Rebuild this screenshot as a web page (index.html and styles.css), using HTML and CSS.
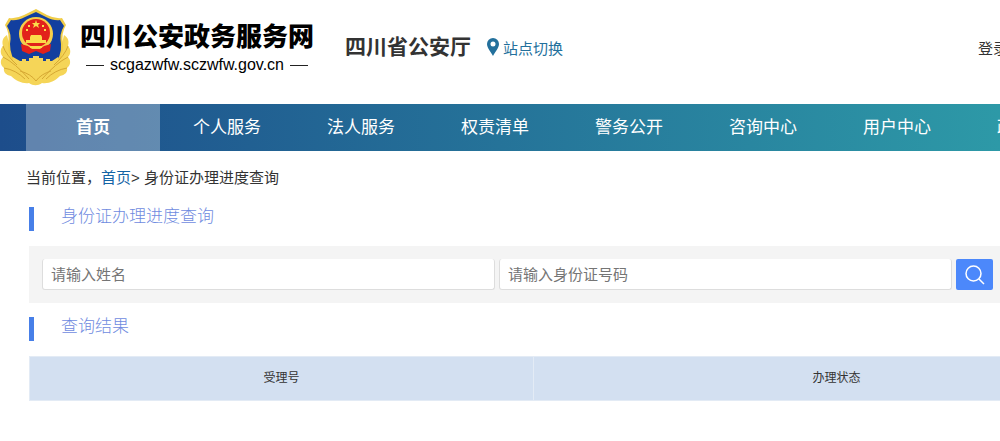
FILE: index.html
```html
<!DOCTYPE html>
<html lang="zh-CN">
<head>
    <meta charset="UTF-8">
    <meta name="viewport" content="width=device-width, initial-scale=1.0">
    <title>身份证办理进度查询</title>
    <link rel="stylesheet" href="styles.css">
</head>
<body>

<header class="header">
    <a class="logo" href="#">
        <svg class="badge" viewBox="0 0 72 78" aria-hidden="true">
            <!-- wheat wreath -->
            <path fill="#f5d558" d="M7 27C2 30 2 34 3 38C0 41 0 46 3 49C0 52 0 57 4 60C3 64 6 67 11 68C16 73 23 76 29 75C33 78 38 78 42 75C49 76 55 73 60 68C65 67 68 64 67 60C71 57 71 52 68 49C71 46 71 41 68 38C69 34 69 30 64 27L58 52L36 60L13 52Z"/>
            <!-- shield -->
            <path fill="#f0cd48" d="M36 1L47 7Q55 11 62 10L66 17Q61 25 63 36Q64 50 54 58L36 64L17 58Q8 50 8 36Q10 25 5 17L9 10Q16 11 24 7Z"/>
            <path fill="#123f9f" d="M36 4L46 9Q54 13 60 12L64 18Q59 26 61 36Q62 49 53 56L36 60L18 56Q10 49 10 36Q12 26 7 18L11 12Q17 13 25 9Z"/>
            <!-- national emblem -->
            <circle cx="36" cy="26" r="17" fill="#f6cf4a"/>
            <circle cx="36" cy="25" r="14" fill="#e2211b"/>
            <path fill="#e2211b" d="M21 36L28 38L32 41H40L44 38L51 36L50 43L43 46L36 43L29 46L22 43Z"/>
            <path fill="#fbdc4a" d="M36 12L37 15H40L38 17L39 20L36 18L33 20L34 17L32 15H35Z"/>
            <path fill="#fbdc4a" d="M28 17h2v2h-2zM42 17h2v2h-2zM26 21h2v2h-2zM44 21h2v2h-2zM31 27h10l1 2H30zM30 29h12v3H30zM26 32h20v3H26zM30 38h12v2H30z"/>
            <!-- great wall -->
            <path fill="#f5d558" d="M13 49L20 53H22V51H26V53H29V50H33V48H39V50H43V53H46V51H50V53H52L58 49L59 57L48 62L36 67L24 62L12 57Z"/>
            <path fill="none" stroke="#d6a833" stroke-width="1" d="M3 49Q15 55 29 71M4 60Q16 62 25 71M68 49Q56 55 42 71M67 60Q55 62 46 71M3 38Q6 47 17 57M68 38Q65 47 54 57M20 63Q31 66 36 73Q41 66 51 63"/>
        </svg>
        <span class="logo-text">
            <span class="logo-name">四川公安政务服务网</span>
            <span class="logo-url">scgazwfw.sczwfw.gov.cn</span>
        </span>
    </a>
    <span class="dept">四川省公安厅</span>
    <a class="site-switch" href="#">
        <svg class="pin" viewBox="0 0 12 18" aria-hidden="true">
            <path fill="#23709c" fill-rule="evenodd" d="M6 0A6 6 0 0 0 0 6C0 10 4 14 6 18C8 14 12 10 12 6A6 6 0 0 0 6 0ZM6 3.5A2.5 2.5 0 1 1 6 8.500A2.500 2.500 0 1 1 6 3.500Z"/>
        </svg>
        站点切换
    </a>
    <a class="login" href="#">登录</a>
</header>

<nav class="nav">
    <a class="nav-item active" href="#">首页</a>
    <a class="nav-item" href="#">个人服务</a>
    <a class="nav-item" href="#">法人服务</a>
    <a class="nav-item" href="#">权责清单</a>
    <a class="nav-item" href="#">警务公开</a>
    <a class="nav-item" href="#">咨询中心</a>
    <a class="nav-item" href="#">用户中心</a>
    <a class="nav-item" href="#">政民互动</a>
</nav>

<main class="main">
    <div class="crumbs">当前位置，<a href="#">首页</a>&gt; 身份证办理进度查询</div>

    <div class="content">
        <h2 class="title">身份证办理进度查询</h2>
        <form class="search">
            <input type="text" name="name" placeholder="请输入姓名" aria-label="姓名">
            <input type="text" name="idcard" placeholder="请输入身份证号码" aria-label="身份证号码">
            <button type="button" aria-label="查询">
                <svg viewBox="0 0 20 20" aria-hidden="true">
                    <circle cx="8.500" cy="8.500" r="7.500"/>
                    <path d="M14 14L19 19"/>
                </svg>
            </button>
        </form>

        <h2 class="title">查询结果</h2>
        <table class="result">
            <thead>
                <tr>
                    <th class="col-no">受理号</th>
                    <th>办理状态</th>
                </tr>
            </thead>
        </table>
    </div>
</main>

</body>
</html>
```
FILE: styles.css
```css
* {
    box-sizing: border-box;
}
body {
    margin: 0;
    background: #fff;
    color: #333;
    font-family: "Liberation Sans", "Noto Sans CJK SC", sans-serif;
    font-size: 15px;
    overflow-x: hidden;
}
a {
    text-decoration: none;
}
.header {
    display: flex;
    align-items: center;
    height: 104px;
    padding-bottom: 10px;
    overflow: hidden;
}
.logo {
    display: flex;
    align-items: center;
    gap: 8px;
    color: #000;
}
.badge {
    width: 72px;
    height: 78px;
}
.logo-text {
    display: flex;
    flex-direction: column;
}
.logo-name {
    font-size: 26px;
    line-height: 36px;
    font-weight: 900;
}
.logo-url {
    display: flex;
    align-items: center;
    justify-content: center;
    gap: 6px;
    font-size: 16px;
    line-height: 20px;
}
.logo-url::before,
.logo-url::after {
    content: "";
    width: 18px;
    height: 1px;
    background: #222;
}
.dept {
    margin-left: 31px;
    font-size: 21px;
    line-height: 30px;
    font-weight: bold;
}
.site-switch {
    display: flex;
    align-items: center;
    gap: 4px;
    margin-left: 16px;
    color: #23709c;
}
.pin {
    width: 12px;
    height: 18px;
}
.login {
    margin-left: auto;
    margin-right: -8px;
    color: #333;
}
.nav {
    display: flex;
    height: 47px;
    padding-left: 26px;
    background: linear-gradient(to right, #1d4d8b, #2d99a7);
    overflow: hidden;
}
.nav-item {
    flex: 0 0 134px;
    color: #fff;
    font-size: 17px;
    line-height: 48px;
    text-align: center;
}
.nav-item.active {
    background: rgba(255, 255, 255, 0.3);
    font-weight: bold;
}
.main {
    padding-left: 26px;
}
.crumbs {
    padding: 15px 0 17px;
    line-height: 24px;
}
.crumbs a {
    color: #1464a5;
}
/* the content column is wider than a small window */
.content {
    min-width: 1114px;
    padding-left: 3px;
}
.title {
    margin: 0;
    padding: 0 0 4px 27px;
    border-left: 5px solid #477fe8;
    color: #6f8be0;
    font-size: 17px;
    font-weight: 300;
    line-height: 20px;
}
.search {
    display: flex;
    gap: 4px;
    margin: 15px 0 14px;
    padding: 13px;
    background: #f4f4f4;
}
.search input {
    width: 453px;
    height: 31px;
    padding: 0 8px;
    border: 1px solid #ddd;
    border-top: none;
    border-radius: 3px;
    background: #fff;
    font-family: inherit;
    font-size: 15px;
}
.search input::placeholder {
    color: #757575;
}
.search button {
    width: 37px;
    height: 31px;
    padding: 0;
    border: none;
    border-radius: 2px;
    background: #4c88fb;
    cursor: pointer;
}
.search svg {
    display: block;
    width: 20px;
    height: 20px;
    margin: 0 auto;
    fill: none;
    stroke: #fff;
    stroke-width: 1.5;
}
.result {
    width: 100%;
    margin-top: 15px;
    border-collapse: collapse;
    table-layout: fixed;
}
.result th {
    height: 44px;
    padding: 0 0 4px;
    border: 1px solid #e3ebf5;
    background: #d3e0f1;
    font-size: 12px;
    font-weight: normal;
}
.result .col-no {
    width: 504px;
}
```
